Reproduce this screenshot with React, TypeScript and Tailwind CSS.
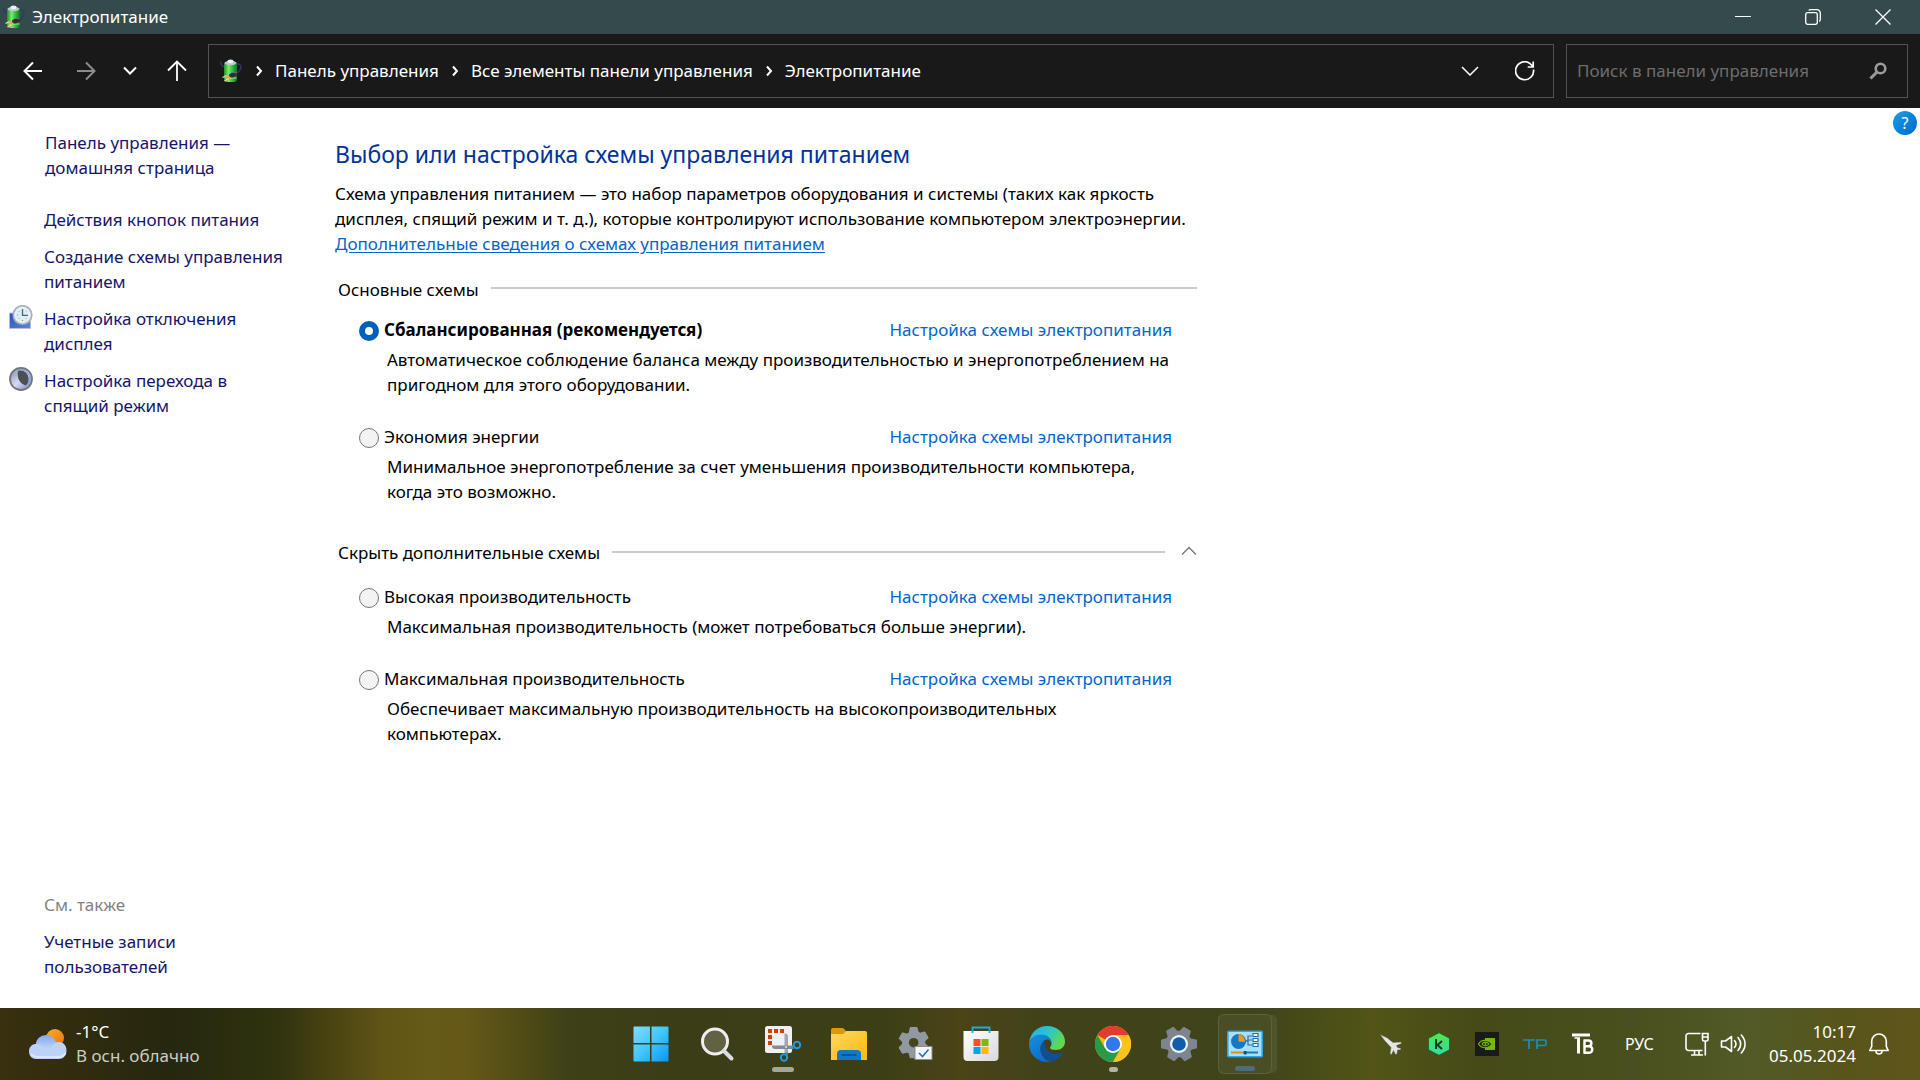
import { useState } from "react";
import type { ReactNode } from "react";

function BatteryIcon() {
  return (
    <svg viewBox="0 0 24 24" className="h-6 w-6 shrink-0" aria-hidden="true">
      <defs>
        <linearGradient id="cell" x1="0" x2="1">
          <stop offset="0" stopColor="#1f8f2a" />
          <stop offset=".35" stopColor="#7bea6e" />
          <stop offset=".6" stopColor="#3cc544" />
          <stop offset="1" stopColor="#14711f" />
        </linearGradient>
      </defs>
      <path d="M1.500 2.500c.2 3 1 4.500 4 5.500M17 5c5-1 6 3 4 6-1 2-3 2.500-4 4" fill="none" stroke="#37336a" strokeWidth="1.400" />
      <rect x="5" y="3" width="13" height="20" rx="3" fill="url(#cell)" />
      <ellipse cx="11.500" cy="4" rx="6" ry="2.200" fill="#bfc8d2" />
      <ellipse cx="11.500" cy="2.400" rx="3" ry="1.800" fill="#eef2f6" />
      <rect x="5.500" y="18.500" width="12" height="1" fill="#b9f5a8" opacity=".8" />
      <path d="M10 15.500l4-2.500 5 .5-1 3-4 2-3.500 0z" fill="#2c3036" />
      <path d="M8.500 16l3.500 2.500-3 2.500-3-2.500z" fill="#d9a566" />
      <path d="M7.500 16.500l-4 2M9.500 19.500l-4 2.500" stroke="#f3dfb0" strokeWidth="1.300" />
      <path d="M13 13.500l5 .3" stroke="#70757d" strokeWidth="1" />
    </svg>
  );
}

function Crumb({ children }: { children: ReactNode }) {
  return (
    <li className="flex items-center">
      <svg viewBox="0 0 8 12" className="mx-3 h-3 w-2" fill="none" stroke="#fff" strokeWidth="2" aria-hidden="true">
        <path d="M2 1.500L6 6l-4 4.500" />
      </svg>
      <a href="#" className="whitespace-nowrap">{children}</a>
    </li>
  );
}

function TitleBar() {
  return (
    <header className="flex h-[34px] shrink-0 items-center bg-[#344a4d] pl-0.5 pr-0.5 text-white">
      <BatteryIcon />
      <h1 className="ml-1.5 text-[17px] leading-6">Электропитание</h1>
      <div className="ml-auto flex self-stretch">
        <button aria-label="Свернуть" className="flex w-[70px] items-center justify-center">
          <svg viewBox="0 0 16 16" className="h-4 w-4" stroke="#fff"><path d="M0 7.500h16" /></svg>
        </button>
        <button aria-label="Восстановить" className="flex w-[70px] items-center justify-center">
          <svg viewBox="0 0 16 16" className="h-4 w-4" stroke="#fff" fill="none" strokeWidth="1.300">
            <rect x=".7" y="3.700" width="11.600" height="11.600" rx="2" />
            <path d="M3.700 1.500C4 1 5 .7 5.500.7H12a3.300 3.300 0 0 1 3.300 3.300v6.500c0 .8-.4 1.500-1 2" />
          </svg>
        </button>
        <button aria-label="Закрыть" className="flex w-[70px] items-center justify-center">
          <svg viewBox="0 0 16 16" className="h-4 w-4" stroke="#fff" strokeWidth="1.300"><path d="M.5.5l15 15M15.500.5l-15 15" /></svg>
        </button>
      </div>
    </header>
  );
}

function NavBar() {
  return (
    <nav className="flex h-[74px] shrink-0 items-center bg-[#191919] pl-2 pr-3 text-white">
      <button aria-label="Назад" className="flex h-10 w-[50px] items-center justify-center">
        <svg viewBox="0 0 20 20" className="h-5 w-5" fill="none" stroke="#fff" strokeWidth="2"><path d="M19 10H2M10 1.500L1.500 10l8.500 8.500" /></svg>
      </button>
      <button aria-label="Вперед" className="flex h-10 w-14 items-center justify-center">
        <svg viewBox="0 0 20 20" className="h-5 w-5" fill="none" stroke="#8c8c8c" strokeWidth="2"><path d="M1 10h17M10 1.500l8.500 8.500-8.500 8.500" /></svg>
      </button>
      <button aria-label="Последние расположения" className="flex h-10 w-8 items-center justify-center">
        <svg viewBox="0 0 14 10" className="h-2.5 w-3.5" fill="none" stroke="#fff" strokeWidth="2"><path d="M1 1.500l6 6 6-6" /></svg>
      </button>
      <button aria-label="Вверх" className="flex h-10 w-[62px] items-center justify-center">
        <svg viewBox="0 0 20 22" className="h-[22px] w-5" fill="none" stroke="#fff" strokeWidth="1.800"><path d="M10 21V2M1 10.500L10 1.500l9 9" /></svg>
      </button>
      <div className="flex h-[54px] min-w-0 flex-1 items-center border border-[#535353] pl-2.5">
        <BatteryIcon />
        <ol className="flex text-[17px] leading-6">
          <Crumb>Панель управления</Crumb>
          <Crumb>Все элементы панели управления</Crumb>
          <Crumb>Электропитание</Crumb>
        </ol>
        <button aria-label="Предыдущие расположения" className="ml-auto flex h-10 w-[54px] items-center justify-center">
          <svg viewBox="0 0 18 10" className="h-2.5 w-[18px]" fill="none" stroke="#fff" strokeWidth="1.500"><path d="M1 1l8 8 8-8" /></svg>
        </button>
        <button aria-label="Обновить" className="flex h-10 w-14 items-center justify-center">
          <svg viewBox="0 0 20 20" className="h-5 w-5" fill="none" stroke="#fff" strokeWidth="1.700">
            <path d="M18.500 8.500A9 9 0 1 1 14.500 2.200L18 5.500M18.200.5v5.500h-5.500" />
          </svg>
        </button>
      </div>
      <div className="ml-3 flex h-[54px] w-[342px] items-center border border-[#535353] pl-2.5 pr-5">
        <input
          type="search"
          aria-label="Поиск в панели управления"
          placeholder="Поиск в панели управления"
          className="min-w-0 flex-1 bg-transparent text-[17px] leading-6 outline-none placeholder:text-[#6d6d6d]"
        />
        <svg viewBox="0 0 18 18" className="h-[18px] w-[18px]" fill="none" stroke="#9b9b9b" aria-hidden="true">
          <circle cx="11.500" cy="6.500" r="4.800" strokeWidth="2.600" />
          <path d="M8 10l-6.500 6.500" strokeWidth="3" />
        </svg>
      </div>
    </nav>
  );
}

function DisplayIcon() {
  return (
    <svg viewBox="0 0 24 24" className="h-6 w-6" aria-hidden="true">
      <defs>
        <linearGradient id="scr" x1="0" y1="0" x2="1" y2="1">
          <stop offset="0" stopColor="#2a4fb5" />
          <stop offset="1" stopColor="#5d86e2" />
        </linearGradient>
      </defs>
      <path d="M.5 8h21v15.500H.5z" fill="url(#scr)" stroke="#b8bfcc" />
      <circle cx="13.500" cy="10" r="9.300" fill="#d3e3ec" stroke="#a7b0b8" strokeWidth="1.600" />
      <circle cx="13.500" cy="10" r="7.300" fill="#dfeef5" stroke="#f5f9fb" strokeWidth=".8" />
      <path d="M13.500 4v6.300h5.500" fill="none" stroke="#4f6470" strokeWidth="1.300" />
      <path d="M8 10h1M13.500 15v1M9.500 6l.7.7M17.500 6l-.7.7M9.500 14l.7-.7M17.500 14l-.7-.7" stroke="#7e929d" />
    </svg>
  );
}

function MoonIcon() {
  return (
    <svg viewBox="0 0 24 24" className="h-6 w-6" aria-hidden="true">
      <defs>
        <linearGradient id="moon" x1="0" y1="0" x2="1" y2="1">
          <stop offset="0" stopColor="#7d86ad" />
          <stop offset=".5" stopColor="#d5dbf0" />
          <stop offset="1" stopColor="#7181b8" />
        </linearGradient>
      </defs>
      <circle cx="12" cy="12" r="11" fill="url(#moon)" stroke="#74777c" strokeWidth="1.800" />
      <path d="M9 4c6-2 10.500 2.500 10.500 8 0 3.500-1 5.500-3 6.500C11 16.500 7.500 11 9 4z" fill="#4c4f56" />
      <path d="M12 2.800c5 .5 8.700 4 9 9-.2 3-1 5-3 7" fill="none" stroke="#86a3e6" strokeWidth="1.300" />
    </svg>
  );
}

function SideLink({ icon, children }: { icon?: ReactNode; children: ReactNode }) {
  return (
    <li className="flex items-start gap-[11px]">
      <span className="-mt-px h-6 w-6 shrink-0">{icon}</span>
      <a href="#">{children}</a>
    </li>
  );
}

function Sidebar() {
  return (
    <aside className="flex w-[335px] shrink-0 flex-col pb-[29px] pl-[9px] pt-[22px] text-[#15156b]">
      <a href="#" className="mb-[27px] ml-9">Панель управления —<br />домашняя страница</a>
      <ul className="flex flex-col gap-3">
        <SideLink>Действия кнопок питания</SideLink>
        <SideLink>Создание схемы управления<br />питанием</SideLink>
        <SideLink icon={<DisplayIcon />}>Настройка отключения<br />дисплея</SideLink>
        <SideLink icon={<MoonIcon />}>Настройка перехода в<br />спящий режим</SideLink>
      </ul>
      <div className="ml-[35px] mt-auto flex flex-col gap-3">
        <h2 className="text-[#838383]">См. также</h2>
        <a href="#">Учетные записи<br />пользователей</a>
      </div>
    </aside>
  );
}

type Plan = { id: string; name: string; text: ReactNode };

const basic: Plan[] = [
  {
    id: "balanced",
    name: "Сбалансированная (рекомендуется)",
    text: <>Автоматическое соблюдение баланса между производительностью и энергопотреблением на<br />пригодном для этого оборудовании.</>,
  },
  {
    id: "saver",
    name: "Экономия энергии",
    text: <>Минимальное энергопотребление за счет уменьшения производительности компьютера,<br />когда это возможно.</>,
  },
];

const extra: Plan[] = [
  { id: "high", name: "Высокая производительность", text: "Максимальная производительность (может потребоваться больше энергии)." },
  {
    id: "ultimate",
    name: "Максимальная производительность",
    text: <>Обеспечивает максимальную производительность на высокопроизводительных<br />компьютерах.</>,
  },
];

function Plans({ plans, value, onChange }: { plans: Plan[]; value: string; onChange: (id: string) => void }) {
  return (
    <div className="flex flex-col gap-[27px] pl-6 pr-[25px]">
      {plans.map((p) => (
        <div key={p.id}>
          <div className="flex items-center">
            <input
              type="radio"
              id={p.id}
              name="plan"
              checked={value === p.id}
              onChange={() => onChange(p.id)}
              className="mr-[5px] mt-0.5 h-5 w-5 shrink-0 appearance-none rounded-full border border-[#767676] bg-[#f3f3f3] checked:border-[6px] checked:border-[#0060b9] checked:bg-white"
            />
            <label htmlFor={p.id} className={value === p.id ? "font-bold" : ""}>{p.name}</label>
            <a href="#" className="ml-auto text-[#0066cc]">Настройка схемы электропитания</a>
          </div>
          <p className="ml-7 mt-[5px] whitespace-nowrap">{p.text}</p>
        </div>
      ))}
    </div>
  );
}

function Content() {
  const [plan, setPlan] = useState("balanced");
  const [open, setOpen] = useState(true);
  return (
    <main className="w-full max-w-[862px] pt-[31px]">
      <h2 className="text-[23px] leading-[30px] text-[#003399]">Выбор или настройка схемы управления питанием</h2>
      <p className="mt-3 whitespace-nowrap">
        Схема управления питанием — это набор параметров оборудования и системы (таких как яркость<br />
        дисплея, спящий режим и т. д.), которые контролируют использование компьютером электроэнергии.<br />
        <a href="#" className="text-[#0066cc] underline underline-offset-2">Дополнительные сведения о схемах управления питанием</a>
      </p>
      <div className="mb-[15px] mt-[21px] flex items-center gap-3 pl-[3px]">
        <h3>Основные схемы</h3>
        <div className="mb-1 h-0.5 flex-1 bg-[#cccccc]" />
      </div>
      <Plans plans={basic} value={plan} onChange={setPlan} />
      <button onClick={() => setOpen(!open)} aria-expanded={open} className="mb-[19px] mt-9 flex w-full items-center gap-3 pl-[3px] text-left">
        <span>Скрыть дополнительные схемы</span>
        <span className="mb-0.5 h-0.5 flex-1 bg-[#cccccc]" />
        <svg viewBox="0 0 16 10" className="mb-1 ml-1 h-2.5 w-4" fill="none" stroke="#777" strokeWidth="1.400" aria-hidden="true"><path d="M1 8.500l7-7 7 7" /></svg>
      </button>
      {open && <Plans plans={extra} value={plan} onChange={setPlan} />}
    </main>
  );
}

function TaskButton({ label, mark, active, children }: { label: string; mark?: string; active?: boolean; children: ReactNode }) {
  return (
    <button
      aria-label={label}
      className={
        active
          ? "relative mx-1.5 flex h-[60px] w-[54px] items-center justify-center rounded-md border border-white/10 bg-white/5 shadow-[6px_0_0_-1px_rgba(255,255,255,0.08)]"
          : "relative mx-1.5 flex h-[60px] w-[54px] items-center justify-center"
      }
    >
      {children}
      {mark && <span className={mark} />}
    </button>
  );
}

const gear =
  "M14.500 1h7l1.300 5.100 2.700 1.600 5.100-1.500 3.500 6-3.800 3.700v3.200l3.800 3.700-3.500 6-5.100-1.500-2.700 1.600L21.500 35h-7l-1.300-5.100-2.700-1.600-5.100 1.500-3.500-6 3.800-3.700v-3.200l-3.800-3.700 3.500-6 5.100 1.500 2.700-1.600z";

function Apps() {
  return (
    <div className="mr-6 flex items-center">
      <TaskButton label="Пуск">
        <svg viewBox="0 0 36 36" className="h-9 w-9">
          <defs>
            <linearGradient id="win" x1="0" y1="0" x2="36" y2="36" gradientUnits="userSpaceOnUse">
              <stop offset="0" stopColor="#84ddff" /><stop offset=".5" stopColor="#3fc6fa" /><stop offset="1" stopColor="#0a93f5" />
            </linearGradient>
          </defs>
          <path fill="url(#win)" d="M1.500.5h15.500v16.500H.5V1.500a1 1 0 0 1 1-1zM18.500.5h16a1 1 0 0 1 1 1v15.500h-17zM.5 18.500H17v17H1.500a1 1 0 0 1-1-1zM18.500 18.500h17v16a1 1 0 0 1-1 1h-16z" />
        </svg>
      </TaskButton>
      <TaskButton label="Поиск">
        <svg viewBox="0 0 36 36" className="h-9 w-9" fill="none">
          <circle cx="16" cy="15.500" r="12.500" fill="#7b7c62" fillOpacity=".6" stroke="#eeeef2" strokeWidth="3" />
          <path d="M25 25l7.500 7.500" stroke="#dcdce4" strokeWidth="4" strokeLinecap="round" />
        </svg>
      </TaskButton>
      <TaskButton label="Ножницы" mark="absolute bottom-0.5 h-[5px] w-[22px] rounded-full bg-[#a6a797]">
        <svg viewBox="0 0 36 36" className="h-9 w-9">
          <rect x="0" y="0" width="27" height="27" rx="2.500" fill="#eef0f3" />
          <path d="M3 3h4v4H3zM9 3h4v4H9zM15 3h4v4h-4zM3 9h4v4H3zM3 15h4v4H3z" fill="#d83b01" />
          <path d="M20 7.500a3 3 0 0 1 3 3V27h-3.500V7.500z" fill="#a3a7ae" />
          <path d="M7 20.500a3 3 0 0 0 3 2.500h18v-3.500H7z" fill="#858a92" />
          <circle cx="32" cy="19" r="3.200" fill="none" stroke="#1e9be4" strokeWidth="2" />
          <circle cx="19" cy="31.500" r="3.200" fill="none" stroke="#1e9be4" strokeWidth="2" />
          <path d="M28.500 21.500l-2 1.500M21.500 28.500l1.500-2" stroke="#1e9be4" strokeWidth="2" />
          <circle cx="21" cy="21" r="1" fill="#e5e7ea" />
        </svg>
      </TaskButton>
      <TaskButton label="Проводник">
        <svg viewBox="0 0 36 36" className="h-9 w-9">
          <defs>
            <linearGradient id="fold" x1="0" y1="0" x2="1" y2="1"><stop offset="0" stopColor="#ffd860" /><stop offset="1" stopColor="#fcb810" /></linearGradient>
          </defs>
          <path d="M0 4a2 2 0 0 1 2-2h10l4 4v8H0z" fill="#dc9a08" />
          <path d="M12 8l3.500-3H34a2 2 0 0 1 2 2v27H0V8z" fill="url(#fold)" />
          <path d="M6 34V28a4 4 0 0 1 4-4h16a4 4 0 0 1 4 4v6z" fill="#0f78cb" />
          <path d="M10.500 29h15" stroke="#0a4e91" strokeWidth="1.600" />
        </svg>
      </TaskButton>
      <TaskButton label="Параметры компонентов">
        <svg viewBox="0 0 36 36" className="h-9 w-9">
          <g transform="translate(1 1) scale(.87)">
            <path d={gear} fill="#9298a1" stroke="#9298a1" strokeWidth="2" strokeLinejoin="round" />
            <circle cx="18" cy="18" r="5.500" fill="#454718" />
          </g>
          <rect x="18" y="20.500" width="17" height="13" fill="#f4f5f7" stroke="#8c8c93" />
          <path d="M22 27l3.500 3.500 6-7" fill="none" stroke="#1476d0" strokeWidth="1.600" />
        </svg>
      </TaskButton>
      <TaskButton label="Microsoft Store">
        <svg viewBox="0 0 36 36" className="h-9 w-9">
          <defs>
            <linearGradient id="store" x1="0" y1="0" x2="1" y2="1"><stop offset="0" stopColor="#ffffff" /><stop offset="1" stopColor="#d8d8da" /></linearGradient>
          </defs>
          <path d="M.5 5h35v26a4 4 0 0 1-4 4h-27a4 4 0 0 1-4-4z" fill="url(#store)" />
          <path d="M9.500 7V1.500h17V7" fill="none" stroke="#1fa9e1" strokeWidth="1.800" />
          <path d="M10.500 13h7v7h-7z" fill="#f25022" /><path d="M18.500 13h7v7h-7z" fill="#7fba00" />
          <path d="M10.500 21h7v7h-7z" fill="#00a4ef" /><path d="M18.500 21h7v7h-7z" fill="#ffb900" />
        </svg>
      </TaskButton>
      <TaskButton label="Microsoft Edge">
        <svg viewBox="0 0 36 36" className="h-9 w-9">
          <defs>
            <linearGradient id="e1" x1="0" y1="0" x2="1" y2=".5"><stop offset="0" stopColor="#2aa9e2" /><stop offset=".5" stopColor="#2bc3d2" /><stop offset="1" stopColor="#62d84e" /></linearGradient>
            <linearGradient id="e2" x1="0" y1="0" x2=".6" y2="1"><stop offset="0" stopColor="#1593dc" /><stop offset="1" stopColor="#0a6cc6" /></linearGradient>
          </defs>
          <path d="M0 17C1 7 8.500 0 18 0c10.500 0 18 7.500 18 15.500 0 5.500-4 8.500-9 8.500-3.500 0-6-1-6-2.300 0-1 1.500-1.500 1.500-4.200C22.500 12 17.500 9 12.500 9 6 9 1.500 12.500 0 17z" fill="url(#e1)" />
          <path d="M0 18C1 12.500 6 8.500 12.500 8.500c5 0 10 3.500 10 8.500-1-2.500-3-3.500-4.500-3.500-3 0-6.500 4-6.500 9C11.500 29 16 35 22.500 35.300c-1.500.5-3 .7-4.500.7C8 36 0 28 0 18z" fill="url(#e2)" />
          <path d="M15.500 14.500c-2.500 2-4 5-4 8C11.500 29.500 17 36 23 35.200c4.500-1.200 8.500-4.200 11-8.200.3-.5-.2-.9-.7-.6-1.800.9-4 1.400-6.300 1.400-7 0-12.500-5-11.500-13.300z" fill="#104f96" />
        </svg>
      </TaskButton>
      <TaskButton label="Google Chrome" mark="absolute bottom-0.5 h-[5px] w-[9px] rounded-full bg-[#b2b3a2]">
        <svg viewBox="0 0 36 36" className="h-9 w-9">
          <circle cx="18" cy="18" r="18" fill="#fbbc04" />
          <path d="M18 18L2.400 9A18 18 0 0 1 33.600 9z" fill="#e33b2e" />
          <path d="M2.400 9A18 18 0 0 0 18 36l7.800-13.500L18 18l-7.800 4.500z" fill="#2a9a48" />
          <path d="M18 9h15.600A18 18 0 0 1 18 36l7.800-13.500z" fill="#fcc31c" />
          <circle cx="18" cy="18" r="9" fill="#fff" />
          <circle cx="18" cy="18" r="7.200" fill="#2f78ed" />
        </svg>
      </TaskButton>
      <TaskButton label="Параметры">
        <svg viewBox="0 0 36 36" className="h-9 w-9">
          <path d={gear} transform="rotate(90 18 18)" fill="#7d8590" stroke="#7d8590" strokeWidth="2" strokeLinejoin="round" />
          <circle cx="18" cy="18" r="9" fill="#f0f2f5" />
          <circle cx="18" cy="18" r="6.800" fill="#0f5eaa" />
        </svg>
      </TaskButton>
      <TaskButton label="Панель управления" active mark="absolute bottom-0.5 h-[5px] w-5 rounded-full bg-[#4b6e79]">
        <svg viewBox="0 0 36 36" className="h-9 w-9">
          <rect x=".8" y="5.300" width="34.400" height="25.400" rx="1" fill="#a5e1fb" stroke="#2fa4e2" strokeWidth="1.600" />
          <circle cx="11.500" cy="15.500" r="7.500" fill="#1678c4" />
          <path d="M11.500 15.500V8a7.500 7.500 0 0 1 6.500 8z" fill="#f7931e" />
          <path d="M18 16l3-2v-4h4M21 14h4M21 14v5h4" fill="none" stroke="#3b6b94" strokeWidth="1.200" />
          <path d="M26 7.500h5v3h-5zM26 12.500h5v3h-5zM26 17.500h5v3h-5z" fill="#fff" stroke="#1972b8" strokeWidth="1.200" />
          <path d="M4 26.500h12" stroke="#e58a1d" strokeWidth="2" /><path d="M16 26.500h15" stroke="#1c77bd" strokeWidth="2" />
          <rect x="17" y="25" width="2.500" height="3.500" fill="#0c4f8b" />
        </svg>
      </TaskButton>
    </div>
  );
}

function Weather() {
  return (
    <button className="flex items-center gap-2 justify-self-start pl-7 text-left text-[17px] leading-6 text-white">
      <svg viewBox="0 0 40 34" className="h-[34px] w-10" aria-hidden="true">
        <defs>
          <linearGradient id="sun" x1="0" y1="0" x2="1" y2="1"><stop offset="0" stopColor="#f5b427" /><stop offset="1" stopColor="#f26b12" /></linearGradient>
          <linearGradient id="cld" x1="0" y1="0" x2="0" y2="1"><stop offset="0" stopColor="#84a8ee" /><stop offset="1" stopColor="#dbe9fb" /></linearGradient>
        </defs>
        <circle cx="27" cy="11" r="9" fill="url(#sun)" />
        <circle cx="18" cy="18.500" r="10.500" fill="url(#cld)" />
        <path d="M1 24.500C1 19 5 16.500 9 17c4 .3 6.500 2.500 8 5h6c1-4.500 4-7 8-7s7.500 3 7.500 8.500S35 32 31 32H8c-4 0-7-3-7-7.500z" fill="#bdd2f7" />
        <path d="M3 27c2 2.500 4 3 7 3h20c4 0 6-1 7.500-4" fill="none" stroke="#e7f0fd" strokeWidth="2" opacity=".7" />
      </svg>
      <span className="flex flex-col">
        <span>-1°C</span>
        <span className="text-[#cbcbc4]">В осн. облачно</span>
      </span>
    </button>
  );
}

function Tray() {
  return (
    <div className="flex items-center justify-self-end pr-[30px] text-[17px] leading-6 text-white">
      <div className="flex items-center gap-6">
        <button aria-label="Самолет">
          <svg viewBox="0 0 24 24" className="h-6 w-6">
            <path d="M1 2.500l7 3.200 6 4.800 8-.5.500 1.500-5 2 1 2 3.500.8-.5 1.500-3 .2-.5 4-1.500.5-2-4-2 4-1.500-.5 1-6.500L6 9z" fill="#e6e6e6" stroke="#55554c" strokeWidth=".4" />
          </svg>
        </button>
        <button aria-label="Kaspersky">
          <svg viewBox="0 0 24 24" className="h-6 w-6">
            <defs><linearGradient id="kas" x1="0" y1="0" x2="0" y2="1"><stop offset="0" stopColor="#4fe84c" /><stop offset="1" stopColor="#35dca0" /></linearGradient></defs>
            <path d="M12 .7L22.500 6.200v11.600L12 23.300 1.500 17.800V6.200z" fill="url(#kas)" stroke="#1b5c33" strokeWidth=".8" strokeLinejoin="round" />
            <path d="M9 7v10M15 9l-4.500 4 4.500 4" fill="none" stroke="#103a24" strokeWidth="2" />
          </svg>
        </button>
        <button aria-label="NVIDIA">
          <svg viewBox="0 0 24 24" className="h-6 w-6">
            <path d="M0 0h24v24H0z" fill="#191b19" />
            <path d="M10 6h10v12H10z" fill="#76b900" />
            <path d="M3.500 12C6 7.500 13 7 17 12c-4 5-10.500 5-13.500 0z" fill="#191b19" stroke="#76b900" strokeWidth="1.200" />
            <path d="M7 12c1.500-2.500 5-2.500 7 0-2 2.500-5.500 2.500-7 0z" fill="none" stroke="#76b900" strokeWidth="1.200" />
            <circle cx="10.500" cy="12" r="1" fill="#76b900" />
          </svg>
        </button>
        <button aria-label="TP">
          <svg viewBox="0 0 24 24" className="h-6 w-6" fill="none" stroke="#1593b8" strokeWidth="1.700">
            <path d="M0 8h12M6 8v9M14 17V8h7.500a1.500 1.500 0 0 1 1.500 1.500v2.500a1.500 1.500 0 0 1-1.500 1.500H14" />
          </svg>
        </button>
        <button aria-label="TB">
          <svg viewBox="0 0 24 24" className="h-6 w-6" fill="none" stroke="#fff">
            <path d="M1 3h18" strokeWidth="3" />
            <path d="M3.500 6H9" strokeWidth="1.500" />
            <path d="M7.500 6v15.500" strokeWidth="3" />
            <path d="M13.500 8.500v12.500M12.500 8.500h5a2.800 2.800 0 0 1 0 5.700h-4h4.500a3.300 3.300 0 0 1 0 6.600h-5.500" strokeWidth="2.500" />
          </svg>
        </button>
      </div>
      <button className="ml-[30px] w-9 text-left text-base leading-6">РУС</button>
      <button aria-label="Сеть и звук" className="ml-6 flex items-center gap-[11px]">
        <svg viewBox="0 0 24 24" className="h-6 w-6" fill="none" stroke="#fff" strokeWidth="1.600">
          <path d="M15.500 1.500H3.500A2.500 2.500 0 0 0 1 4v12a2.500 2.500 0 0 0 2.500 2.500h14M6 23h12M9.500 18.500V23M14 18.500V23" />
          <path d="M17.500 1.500h5.500v6a1.500 1.500 0 0 1-1.500 1.500H19a1.500 1.500 0 0 1-1.500-1.500zM17.500 5H23M20.300 9v14.500" />
        </svg>
        <svg viewBox="0 0 26 24" className="h-6 w-[26px]" fill="none" stroke="#fff" strokeWidth="1.600" strokeLinejoin="round" strokeLinecap="round">
          <path d="M1.500 9v6h4l6 4.500v-15L5.500 9zM14.500 8.500c1.700 2 1.700 5 0 7M18 5.500c3.300 4 3.300 9 0 13M21.300 3c5 5.500 5 12.500 0 18" />
        </svg>
      </button>
      <button className="flex w-[110px] flex-col items-end whitespace-nowrap">
        <span>10:17</span>
        <span>05.05.2024</span>
      </button>
      <button aria-label="Уведомления" className="ml-3">
        <svg viewBox="0 0 22 24" className="h-6 w-[22px]" fill="none" stroke="#fff" strokeWidth="1.600" strokeLinejoin="round">
          <path d="M11 2a7.300 7.300 0 0 0-7.300 7.300v5L1.800 18.500h18.400l-1.900-4.200v-5A7.300 7.300 0 0 0 11 2zM8 19a3 3 0 0 0 6 0" />
        </svg>
      </button>
    </div>
  );
}

export default function App() {
  return (
    <div className="flex min-h-screen flex-col bg-white font-['Noto_Sans','Open_Sans',sans-serif] text-[17px] leading-[25px] text-black">
      <TitleBar />
      <NavBar />
      <div className="flex flex-1">
        <Sidebar />
        <Content />
        <button aria-label="Справка" className="ml-auto mr-[3px] mt-[3px] flex h-6 w-6 shrink-0 items-center justify-center rounded-full bg-linear-to-br from-[#1ea0e6] to-[#0067d0] text-base leading-6 text-white">?</button>
      </div>
      <footer className="grid h-[72px] shrink-0 grid-cols-[1fr_auto_1fr] items-center bg-[linear-gradient(90deg,#38300f_0%,#26270f_9%,#30330f_14.500%,#4b4512_17.500%,#615516_20%,#665a18_22.500%,#655818_24.300%,#504c16_27%,#3e4117_29.500%,#3a3d16_35%,#3c3f16_46%,#4a4417_50%,#40421a_55%,#41451a_66%,#525516_71.500%,#454a18_77%,#494f1e_85%,#525a28_91%,#57551b_96%,#5f551a_100%)]">
        <Weather />
        <Apps />
        <Tray />
      </footer>
    </div>
  );
}
